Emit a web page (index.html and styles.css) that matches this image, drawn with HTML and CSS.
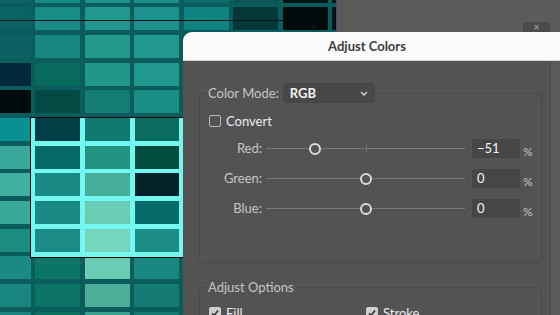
FILE: index.html
```html
<!DOCTYPE html>
<html lang="en">
<head>
    <meta charset="UTF-8">
    <meta name="viewport" content="width=device-width, initial-scale=1.0">
    <title>Adjust Colors</title>
    <link rel="stylesheet" href="styles.css">
</head>
<body>
    <div class="screen">
        <div class="artboard">
            <div class="tiles" id="tiles"></div>
            <div class="guide"></div>
            <div class="tick"></div>
            <div class="selection"></div>
        </div>

        <div class="close-tab">×</div>

        <div class="dialog">
            <div class="titlebar">Adjust Colors</div>
            <div class="dialog-body">
                <fieldset class="group group-color">
                    <legend class="mode">
                        <span class="group-label">Color Mode:</span>
                        <div class="dropdown">
                            <span>RGB</span>
                            <svg width="8" height="5" viewBox="0 0 8 5"><polyline points="1,1 4,4 7,1" fill="none" stroke="#d8d8d8" stroke-width="1.3"/></svg>
                        </div>
                    </legend>

                    <label class="check"><span class="box"></span>Convert</label>

                    <div class="sliders" id="sliders"></div>
                </fieldset>

                <fieldset class="group group-options">
                    <legend class="group-label">Adjust Options</legend>
                    <div class="options">
                        <label class="check">
                            <span class="box checked"><svg width="10" height="10" viewBox="0 0 10 10"><polyline points="2,5.2 4.2,7.4 8,2.6" fill="none" stroke="#333" stroke-width="1.6"/></svg></span>Fill
                        </label>
                        <label class="check">
                            <span class="box checked"><svg width="10" height="10" viewBox="0 0 10 10"><polyline points="2,5.2 4.2,7.4 8,2.6" fill="none" stroke="#333" stroke-width="1.6"/></svg></span>Stroke
                        </label>
                    </div>
                </fieldset>
            </div>
        </div>
    </div>

    <script>
        // Artwork swatches, row by row
        const swatches = [
            ['#0d6464', '#178c88', '#1e938c', '#1b8e8a', '#0c6a6a', '#0b5656', '#021616', '#041c1c'],
            ['#0b6262', '#1a8c88', '#22978e', '#1c918d', '#0f8282', '#043838', '#010a0a', '#031414'],
            ['#0b6161', '#18877f', '#23998e', '#219890', '#1a8c88', '#0c6060', '#0b5e5e', '#0b5e5e'],
            ['#03283a', '#076a5c', '#23968a', '#22998f', '#1a8c88', '#0c6060', '#0b5e5e', '#0b5e5e'],
            ['#020c0c', '#044b46', '#137d75', '#1a8d85', '#1a8c88', '#0c6060', '#0b5e5e', '#0b5e5e'],
            ['#0a8f92', '#033f46', '#117a70', '#0a6c5e', '#1a8c88', '#0c6060', '#0b5e5e', '#0b5e5e'],
            ['#3aa89b', '#056a66', '#22917f', '#034d3f', '#1a8c88', '#0c6060', '#0b5e5e', '#0b5e5e'],
            ['#42b0a1', '#1a8a86', '#47ae9b', '#03222a', '#1a8c88', '#0c6060', '#0b5e5e', '#0b5e5e'],
            ['#3aa999', '#1a8a86', '#6bccb6', '#056a6a', '#1a8c88', '#0c6060', '#0b5e5e', '#0b5e5e'],
            ['#1c8c82', '#1a8b86', '#74d6bf', '#1b8c86', '#1a8c88', '#0c6060', '#0b5e5e', '#0b5e5e'],
            ['#1b8a82', '#0b7666', '#6bccb6', '#1a8681', '#1a8c88', '#0c6060', '#0b5e5e', '#0b5e5e'],
            ['#1a8680', '#0b7466', '#4cae99', '#137b73', '#1a8c88', '#0c6060', '#0b5e5e', '#0b5e5e'],
            ['#1a8580', '#0b7060', '#3aa090', '#137a72', '#1a8c88', '#0c6060', '#0b5e5e', '#0b5e5e']
        ];

        const tiles = document.getElementById('tiles');
        swatches.forEach(row => row.forEach(color => {
            const tile = document.createElement('div');
            tile.className = 'tile';
            tile.style.background = color;
            tiles.appendChild(tile);
        }));

        // Channel sliders, value in percent (-100..100)
        const channels = [
            { name: 'Red', value: -51 },
            { name: 'Green', value: 0 },
            { name: 'Blue', value: 0 }
        ];

        const sliders = document.getElementById('sliders');
        channels.forEach(ch => {
            const pos = (ch.value + 100) / 2;
            const row = document.createElement('div');
            row.className = 'slider-row';
            row.innerHTML =
                `<span class="slider-label">${ch.name}:</span>` +
                `<div class="track">` +
                    (ch.value !== 0 ? `<span class="midtick"></span>` : '') +
                    `<span class="thumb" style="left:${pos}%"></span>` +
                `</div>` +
                `<div class="field">${ch.value < 0 ? '&minus;' + Math.abs(ch.value) : ch.value}</div>` +
                `<span class="pct">%</span>`;
            sliders.appendChild(row);
        });
    </script>
</body>
</html>
```

FILE: styles.css
```css
body {
    margin: 0;
    font-family: Lato, "Open Sans", sans-serif;
    background: #5b5b5b;
}
.screen {
    position: relative;
    width: 560px;
    height: 315px;
    overflow: hidden;
}

/* artwork canvas */
.artboard {
    position: absolute;
    left: 0;
    top: 0;
    width: 336px;
    height: 315px;
    overflow: hidden;
    background: #0b5c5c;
    border-right: 1px solid #3c5070;
}
.tiles {
    position: absolute;
    left: -14.5px;
    top: -20.5px;
    display: grid;
    grid-template-columns: repeat(8, 45px);
    grid-auto-rows: 23px;
    column-gap: 4.5px;
    row-gap: 4.7px;
}
.tile {
    border-radius: 1px;
}
.guide {
    position: absolute;
    left: 0;
    top: 19.5px;
    width: 283px;
    height: 1px;
    background: #0a1414;
}
.tick {
    position: absolute;
    left: 313px;
    top: 25px;
    width: 1px;
    height: 7px;
    background: #1a2a2a;
}
.selection {
    position: absolute;
    left: 29.5px;
    top: 117px;
    width: 170px;
    height: 138.5px;
    border: 1px solid #050808;
    background:
        repeating-linear-gradient(to right, #74f7ee 0 4.5px, transparent 4.5px 49.5px),
        repeating-linear-gradient(to bottom, transparent 0 23px, #74f7ee 23px 27.7px);
}

.close-tab {
    position: absolute;
    left: 523px;
    top: 22px;
    width: 27px;
    height: 12px;
    background: #4b4b4b;
    border-radius: 3px 3px 0 0;
    color: #aaa;
    font-size: 11px;
    line-height: 10px;
    text-align: center;
}

/* dialog */
.dialog {
    position: absolute;
    left: 183px;
    top: 32px;
    width: 377px;
    bottom: 0;
    border-radius: 9px 0 0 0;
    overflow: hidden;
}
.titlebar {
    height: 28px;
    background: #fbfbfb;
    border-bottom: 1px solid #d6d6d6;
    padding-right: 9px;
    text-align: center;
    font-weight: bold;
    font-size: 13px;
    line-height: 28px;
    color: #3c3c3c;
}
.dialog-body {
    height: 100%;
    padding: 22px 18px 0 16px;
    background: linear-gradient(to left, #5a5a5a 9px, #474747 9px 10px, #535353 10px);
}
.group {
    margin: 0;
    padding: 10px 0 0 8px;
    border: 1px solid #4a4a4a;
    border-radius: 4px;
}
.group legend {
    padding: 0 2px 0 0;
}
.group-label {
    font-size: 13px;
    line-height: 16px;
    color: #c6c6c6;
}
.mode {
    display: flex;
    align-items: center;
    gap: 4px;
}
.dropdown {
    display: flex;
    align-items: center;
    justify-content: space-between;
    width: 92px;
    height: 20px;
    box-sizing: border-box;
    padding: 0 7px 0 7px;
    background: #474747;
    border-radius: 4px;
    color: #f2f2f2;
    font-size: 13px;
    font-weight: bold;
}

.check {
    display: flex;
    align-items: center;
    gap: 5px;
    margin-left: 1px;
    height: 16px;
    font-size: 13px;
    color: #ececec;
}
.box {
    display: flex;
    align-items: center;
    justify-content: center;
    width: 12px;
    height: 12px;
    box-sizing: border-box;
    border: 1px solid #b8b8b8;
    border-radius: 2px;
}
.box.checked {
    background: #cfcfcf;
    border-color: #cfcfcf;
}

.sliders {
    display: flex;
    flex-direction: column;
    gap: 11px;
    margin-top: 10px;
    padding-bottom: 44px;
}
.slider-row {
    display: flex;
    height: 19px;
}
.slider-label {
    width: 54px;
    text-align: right;
    font-size: 13px;
    line-height: 19px;
    color: #c6c6c6;
}
.track {
    position: relative;
    width: 199px;
    margin: 0 7px 0 4px;
}
.track::before {
    content: "";
    position: absolute;
    left: 0;
    right: 0;
    top: 9px;
    height: 1px;
    background: #787878;
}
.midtick {
    position: absolute;
    left: 50%;
    top: 5px;
    width: 1px;
    height: 9px;
    background: #6c6c6c;
}
.thumb {
    position: absolute;
    top: 9.5px;
    width: 12px;
    height: 12px;
    box-sizing: border-box;
    border: 2px solid #dadada;
    border-radius: 50%;
    background: #535353;
    transform: translate(-50%, -50%);
}
.field {
    width: 48px;
    box-sizing: border-box;
    padding-left: 5px;
    background: #464646;
    border-radius: 2px;
    font-size: 13px;
    line-height: 19px;
    color: #f4f4f4;
}
.pct {
    margin-left: 3px;
    padding-top: 5px;
    font-size: 12px;
    line-height: 16px;
    color: #c6c6c6;
}

.group-options {
    margin-top: 16px;
    padding-bottom: 20px;
}
.options {
    display: grid;
    grid-template-columns: 157px 157px;
}
```
